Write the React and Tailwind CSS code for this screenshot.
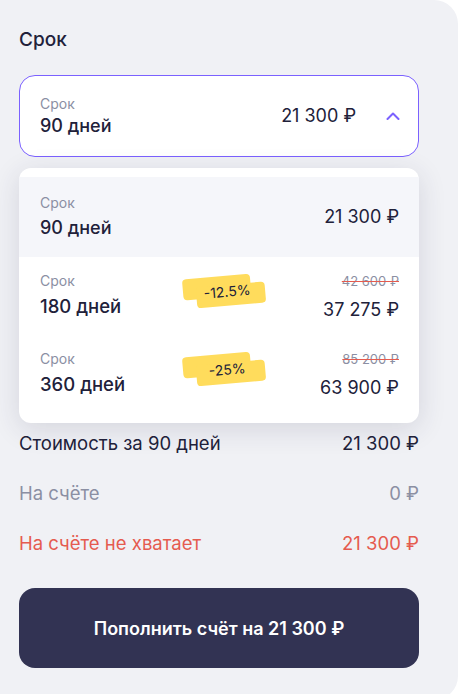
import React from "react";

const options = [
  { days: "90 дней", price: "21 300 ₽", active: true },
  { days: "180 дней", price: "37 275 ₽", old: "42 600 ₽", discount: "-12.5%" },
  { days: "360 дней", price: "63 900 ₽", old: "85 200 ₽", discount: "-25%" },
];

const Badge = ({ text }) => (
  <div className="relative w-[82px] h-[37px] -rotate-[5deg]">
    <div className="absolute left-0 top-[4px] w-[68px] h-[21px] rounded-[4px] bg-[#ffdc5c]" />
    <div className="absolute left-[13px] top-[13px] w-[69px] h-[21px] rounded-[4px] bg-[#ffdc5c]" />
    <div className="absolute left-[18px] top-[11px] w-[52px] text-center text-[14px] leading-[18px] text-[#21213a]">
      {text}
    </div>
  </div>
);

const App = () => {
  return (
    <div className="min-h-[694px] bg-white" style={{ fontFamily: "Inter, 'Noto Sans', sans-serif" }}>
      <div className="w-[458px] min-h-[700px] bg-[#f0f1f5] rounded-r-[24px] pl-[19px] pr-[39px] pt-[28px] pb-[24px] text-[#21213a]">
        <h2 className="text-[19px] leading-[24px] font-medium">Срок</h2>

        {/* select */}
        <div className="relative mt-[23px]">
          <div className="h-[82px] rounded-[16px] border border-[#7b61ff] bg-white flex items-center pl-[20px] pr-[18px]">
            <div className="flex-1">
              <div className="text-[14px] leading-[18px] text-[#8b8fa3]">Срок</div>
              <div className="mt-[1px] text-[18px] leading-[24px] font-medium">90 дней</div>
            </div>
            <div className="text-[18px] leading-[24px]">21 300 ₽</div>
            <svg className="ml-[30px]" width="14" height="8" viewBox="0 0 14 8" fill="none">
              <path d="M1.5 7L7 1.5L12.5 7" stroke="#7b61ff" strokeWidth="2" strokeLinecap="round" strokeLinejoin="round" />
            </svg>
          </div>

          {/* dropdown menu */}
          <div className="absolute left-0 right-0 top-[93px] z-10 bg-white rounded-[12px] pt-[9px] pb-[10px] shadow-[0_6px_28px_rgba(40,40,80,0.14)]">
            {options.map((o) =>
              o.active ? (
                <div key={o.days} className="h-[80px] bg-[#f5f6fa] flex items-center pl-[21px] pr-[20px]">
                  <div className="flex-1">
                    <div className="text-[14px] leading-[18px] text-[#8b8fa3]">Срок</div>
                    <div className="mt-[4px] text-[18px] leading-[24px] font-medium">{o.days}</div>
                  </div>
                  <div className="text-[18px] leading-[24px]">{o.price}</div>
                </div>
              ) : (
                <div key={o.days} className="h-[78px] flex items-start pt-[15px] pl-[21px] pr-[20px]">
                  <div className="w-[143px]">
                    <div className="text-[14px] leading-[18px] text-[#8b8fa3]">Срок</div>
                    <div className="mt-[4px] text-[18.5px] leading-[24px] font-medium">{o.days}</div>
                  </div>
                  <Badge text={o.discount} />
                  <div className="flex-1 text-right">
                    <div className="text-[13px] leading-[18px] text-[#8b8fa3] line-through decoration-[#e55b4f]">{o.old}</div>
                    <div className="mt-[8px] text-[18px] leading-[24px]">{o.price}</div>
                  </div>
                </div>
              )
            )}
          </div>
        </div>

        {/* summary */}
        <div className="mt-[274px] flex flex-col gap-[26px] text-[18.5px] leading-[24px]">
          <div className="flex justify-between">
            <span>Стоимость за 90 дней</span>
            <span>21 300 ₽</span>
          </div>
          <div className="flex justify-between text-[#8b8fa3]">
            <span>На счёте</span>
            <span>0 ₽</span>
          </div>
          <div className="flex justify-between text-[#e55b4f]">
            <span>На счёте не хватает</span>
            <span>21 300 ₽</span>
          </div>
        </div>

        <button className="mt-[33px] w-full h-[80px] rounded-[16px] bg-[#323353] text-white text-[18px] font-semibold">
          Пополнить счёт на 21 300 ₽
        </button>
      </div>
    </div>
  );
};

export default App;
